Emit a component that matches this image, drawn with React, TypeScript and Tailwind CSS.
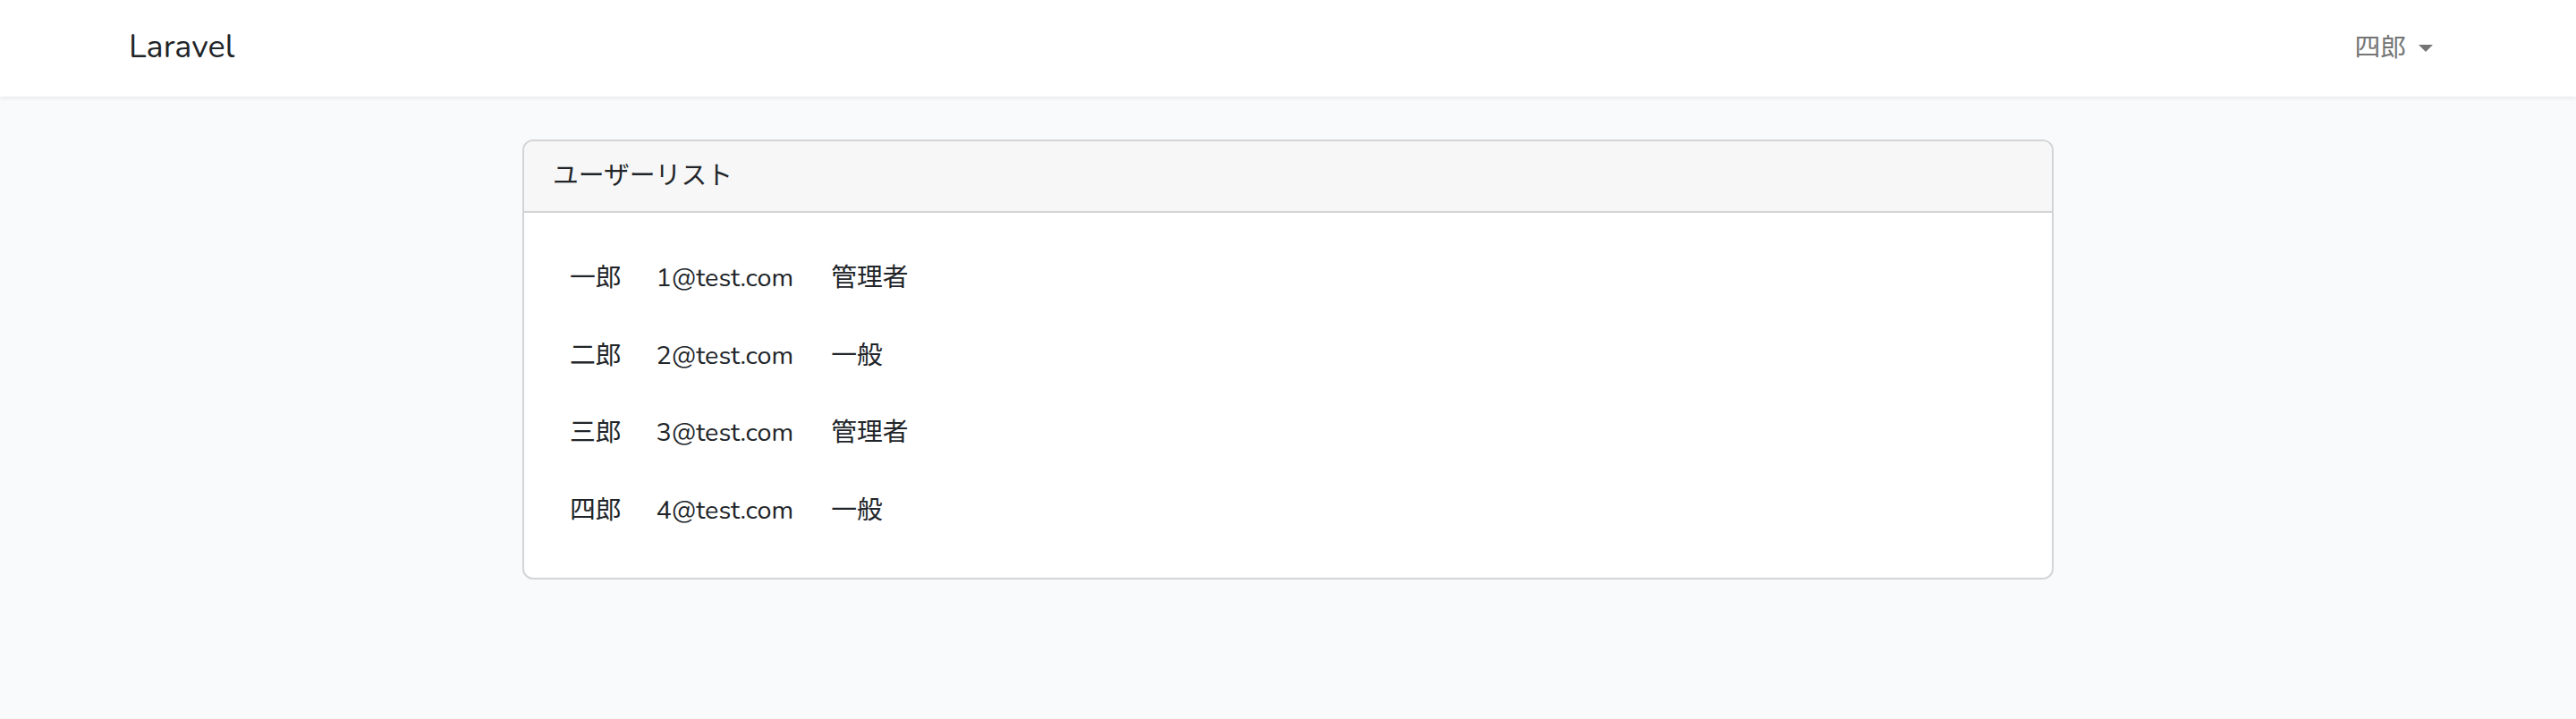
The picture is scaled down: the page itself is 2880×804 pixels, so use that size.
const users = [
  { name: "一郎", email: "1@test.com", role: "管理者" },
  { name: "二郎", email: "2@test.com", role: "一般" },
  { name: "三郎", email: "3@test.com", role: "管理者" },
  { name: "四郎", email: "4@test.com", role: "一般" },
];

const font = "font-['Nunito','Lato','Noto_Sans_CJK_JP',sans-serif]";

export default function App() {
  return (
    <div className={`min-h-[804px] bg-[#f8fafc] text-[#212529] ${font}`}>
      {/* ナビバー */}
      <nav className="h-[108px] bg-white shadow-[0_2px_4px_rgba(0,0,0,0.075)]">
        <div className="mx-auto flex h-full w-[2640px] items-center justify-between px-[24px]">
          <a className="-mt-[2px] text-[36px] leading-none text-[#212529]">Laravel</a>
          <div className="flex items-center gap-[14px] px-[16px] text-[28.8px] text-[#757575]">
            <span>四郎</span>
            <span className="h-0 w-0 border-x-[8px] border-t-[8px] border-x-transparent border-t-[#757575]" />
          </div>
        </div>
      </nav>

      <main className="flex justify-center pt-[48px]">
        <div className="w-[1712px] overflow-hidden rounded-[12px] border-2 border-[#d4d4d4] bg-white">
          <div className="border-b-2 border-[#d4d4d4] bg-[#f7f7f7] px-[32px] py-[16px] text-[28.8px] leading-[46px]">
            ユーザーリスト
          </div>
          <div className="px-[32px] pt-[30px] pb-[32px]">
            <table className="text-[28.8px] leading-[46px]">
              <tbody>
                {users.map((u) => (
                  <tr key={u.email} className="h-[86.5px]">
                    <td className="px-[19px]">{u.name}</td>
                    <td className="pl-[20px] pr-[23px]">{u.email}</td>
                    <td className="px-[19px]">{u.role}</td>
                  </tr>
                ))}
              </tbody>
            </table>
          </div>
        </div>
      </main>
    </div>
  );
}
